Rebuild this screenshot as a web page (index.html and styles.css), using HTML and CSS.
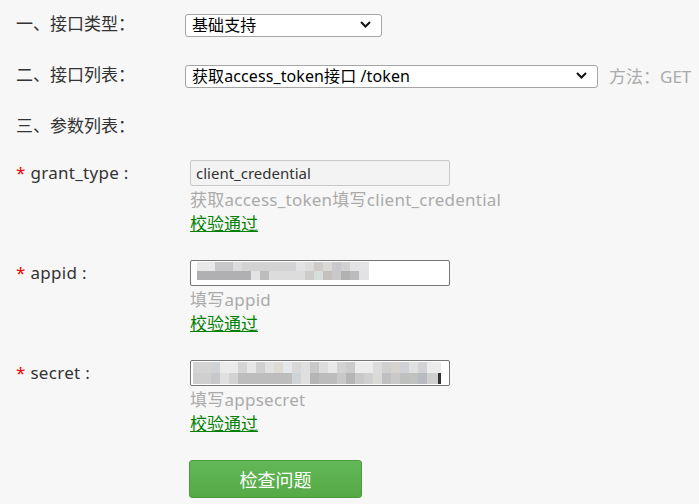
FILE: index.html
```html
<!DOCTYPE html>
<html lang="zh-CN">
<head>
    <meta charset="UTF-8">
    <title>接口调试</title>
    <link rel="stylesheet" href="styles.css">
</head>
<body>
    <div class="debug-form">
        <div class="step-row">
            <div class="step-label">一、接口类型：</div>
            <div class="select-wrap select-short">
                <select class="api-select">
                    <option>基础支持</option>
                </select>
                <svg class="chevron" width="11" height="7" viewBox="0 0 11 7"><path d="M1 1l4.5 4.5L10 1" fill="none" stroke="#111" stroke-width="2"/></svg>
            </div>
        </div>

        <div class="step-row">
            <div class="step-label">二、接口列表：</div>
            <div class="select-wrap select-long">
                <select class="api-select">
                    <option>获取access_token接口 /token</option>
                </select>
                <svg class="chevron" width="11" height="7" viewBox="0 0 11 7"><path d="M1 1l4.5 4.5L10 1" fill="none" stroke="#111" stroke-width="2"/></svg>
            </div>
            <span class="method">方法：GET</span>
        </div>

        <div class="step-row step-params">
            <div class="step-label">三、参数列表：</div>
        </div>

        <div class="param-row">
            <label class="param-label"><span class="required">*</span> grant_type :</label>
            <div class="param-field">
                <input class="param-input readonly" type="text" value="client_credential" readonly>
                <div class="param-hint">获取access_token填写client_credential</div>
                <a class="param-ok" href="#">校验通过</a>
            </div>
        </div>

        <div class="param-row">
            <label class="param-label"><span class="required">*</span> appid :</label>
            <div class="param-field">
                <div class="input-wrap">
                    <input class="param-input" type="text" value="">
                    <div class="mosaic mosaic-appid"></div>
                </div>
                <div class="param-hint">填写appid</div>
                <a class="param-ok" href="#">校验通过</a>
            </div>
        </div>

        <div class="param-row">
            <label class="param-label"><span class="required">*</span> secret :</label>
            <div class="param-field">
                <div class="input-wrap">
                    <input class="param-input" type="text" value="">
                    <div class="mosaic mosaic-secret"></div>
                </div>
                <div class="param-hint">填写appsecret</div>
                <a class="param-ok" href="#">校验通过</a>
            </div>
        </div>

        <div class="actions">
            <button class="check-btn">检查问题</button>
        </div>
    </div>
</body>
</html>
```

FILE: styles.css
```css
* {
    box-sizing: border-box;
    margin: 0;
    padding: 0;
}

body {
    font-family: 'Noto Sans', 'Noto Sans CJK SC', sans-serif;
    font-size: 17px;
    color: #333;
    background-color: #f7f7f7;
    overflow: hidden;
}

.debug-form {
    padding: 12px 0 0 16px;
}

.step-row {
    display: flex;
    align-items: center;
    height: 24px;
    margin-bottom: 27px;
}

.step-params {
    margin-bottom: 22px;
}

.step-label {
    width: 169px;
    line-height: 24px;
    white-space: nowrap;
}

.select-wrap {
    position: relative;
    height: 23px;
}

.select-short {
    width: 197px;
}

.select-long {
    width: 413px;
}

.api-select {
    appearance: none;
    width: 100%;
    height: 100%;
    font-family: inherit;
    font-size: 16px;
    letter-spacing: 0.1px;
    color: #000;
    background-color: #fff;
    border: 1px solid #a5a5a5;
    border-radius: 3px;
    padding: 0 0 0 6px;
    line-height: 21px;
}

.chevron {
    position: absolute;
    right: 11px;
    top: 8px;
    pointer-events: none;
}

.method {
    margin-left: 11px;
    color: #aaa;
    white-space: nowrap;
}

.param-row {
    display: flex;
    margin-bottom: 24px;
}

.param-label {
    width: 174px;
    line-height: 26px;
    color: #333;
    letter-spacing: 0.3px;
}

.required {
    color: #e00;
}

.param-field {
    display: flex;
    flex-direction: column;
    align-items: flex-start;
}

.input-wrap {
    position: relative;
}

.param-input {
    display: block;
    width: 260px;
    height: 26px;
    font-family: 'Noto Sans', 'Noto Sans CJK SC', sans-serif;
    font-size: 15px;
    color: #333;
    background-color: #fff;
    border: 1px solid #767676;
    border-radius: 2px;
    padding: 0 5px;
    margin-bottom: 2px;
}

.param-input.readonly {
    background-color: #f3f3f3;
    border-color: #c8c8c8;
}

.mosaic {
    position: absolute;
    height: 18px;
    background-repeat: no-repeat;
    background-size: 100% 9px;
    background-position: 0 0, 0 9px;
}

.mosaic-appid {
    left: 7px;
    top: 2px;
    width: 172px;
    background-image:
        linear-gradient(to right,
            #e8e8e9 0 18px, #c8c8ca 18px 36px, #dcdcde 36px 45px, #d3d3d3 45px 99px,
            #e2e2e4 99px 108px, #dcdcdc 108px 117px, #cfcbc7 117px 126px, #d9d9d6 126px 135px,
            #c9c9cd 135px 144px, #d1d1d1 144px 153px, #e4e4e7 153px 172px),
        linear-gradient(to right,
            #b0b0b2 0 54px, #e3e3e3 54px 63px, #bdbdbd 63px 72px, #dcdcdc 72px 108px,
            #cecccb 108px 117px, #d7dddb 117px 126px, #c5c0bc 126px 135px, #c9c9cc 135px 144px,
            #b1b1b1 144px 153px, #bbbbbd 153px 162px, #e2e2e5 162px 172px);
}

.mosaic-secret {
    left: 3px;
    top: 2px;
    width: 248px;
    height: 22px;
    background-size: 100% 11px;
    background-position: 0 0, 0 11px;
    background-image:
        linear-gradient(to right,
            #d4d4d4 0 18px, #cfd3d6 18px 27px, #ebebeb 27px 45px, #d4d4d4 45px 54px,
            #e6e6e6 54px 63px, #cfcfcf 63px 72px, #e1e1e1 72px 81px, #dedbd5 81px 90px,
            #e5e8ea 90px 99px, #d8d8d8 99px 108px, #dfdfdf 108px 117px, #c8c8c8 117px 126px,
            #dcdcdc 126px 135px, #e8e8e8 135px 144px, #d2d2d2 144px 153px, #cbcbcb 153px 162px,
            #ececec 162px 180px, #dcdcdc 180px 189px, #d0d0d0 189px 198px, #d6d2ce 198px 207px,
            #cfd1d6 207px 216px, #e0e0e0 216px 225px, #d1d1d6 225px 234px, #ebebeb 234px 248px),
        linear-gradient(to right,
            #cfcfcf 0 18px, #c8c8cb 18px 27px, #dfe1e0 27px 36px, #d2d2d2 36px 45px,
            #bdbdbd 45px 99px, #cdd3d6 99px 108px, #e0e0e0 108px 117px, #b5b5b5 117px 126px,
            #bcbcbc 126px 144px, #c8c8c8 144px 153px, #b5b5b8 153px 162px, #c9c9c9 162px 171px,
            #d0d0d0 171px 180px, #dadad6 180px 189px, #c0c0c0 189px 198px, #c9c9c9 198px 207px,
            #bfbfbf 207px 216px, #c0c2c0 216px 225px, #b8bcc2 225px 234px, #cfcfcf 234px 245px,
            #333 245px 248px);
}

.param-hint {
    line-height: 24px;
    color: #aaa;
    white-space: nowrap;
    letter-spacing: 0.25px;
}

.param-ok {
    line-height: 24px;
    color: #008000;
    text-decoration: underline;
}

.actions {
    padding-left: 173px;
}

.check-btn {
    width: 173px;
    height: 38px;
    font-family: 'Noto Sans CJK SC', sans-serif;
    font-size: 18px;
    color: #fff;
    background: linear-gradient(#62b757, #55a945);
    border: 1px solid #4b9a3b;
    border-radius: 3px;
    cursor: pointer;
}
```
